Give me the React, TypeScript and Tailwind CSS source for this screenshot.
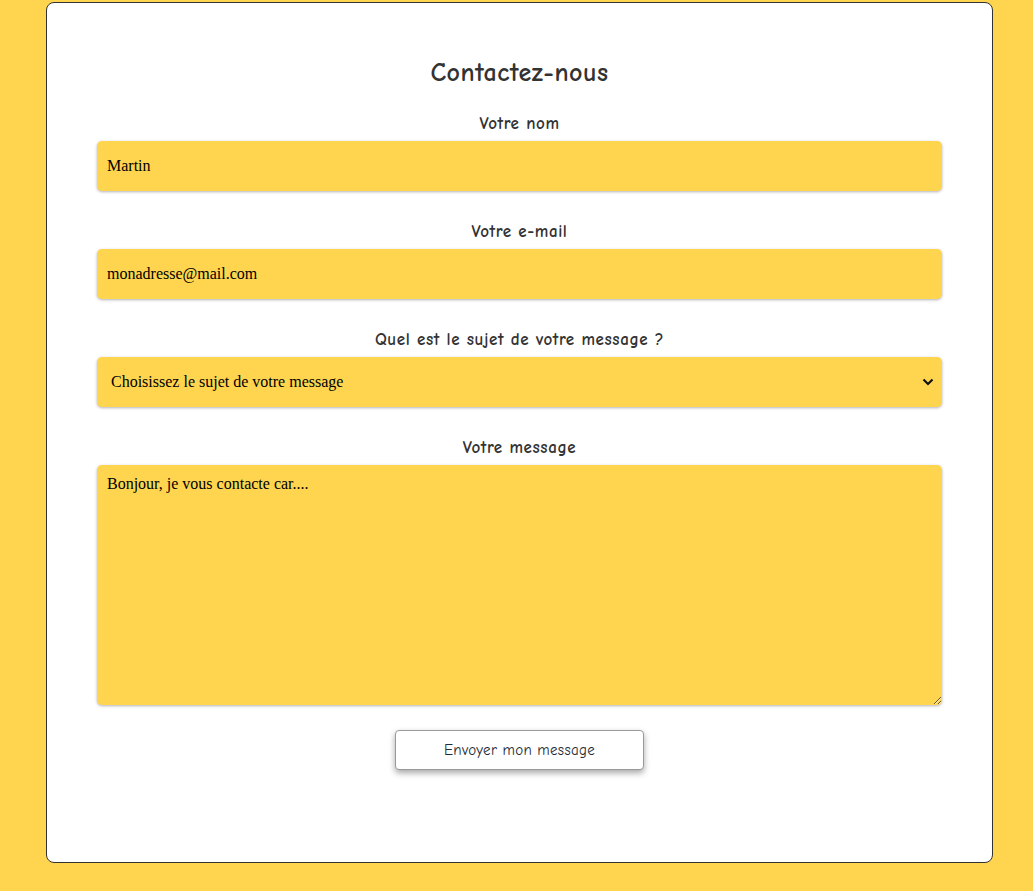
import { useState } from "react";

const comic = "font-['Comic_Sans_MS','Comic_Neue','Lato',sans-serif]";
const labelCls = `${comic} block text-center text-[17px] font-bold leading-[20px] tracking-[0.6px] text-[#333]`;
const fieldCls =
  "h-[50px] w-full rounded-[5px] bg-[#ffd54f] font-['Liberation_Serif',serif] text-[16px] text-black shadow-[0_1px_3px_rgba(0,0,0,0.3)] outline-none";

export default function App() {
  const [name, setName] = useState("Martin");
  const [email, setEmail] = useState("monadresse@mail.com");
  const [message, setMessage] = useState("Bonjour, je vous contacte car....");

  return (
    <div className="min-h-[891px] w-full bg-[#ffd54f] pt-[2px]">
      <div className="ml-[46px] h-[861px] w-[947px] rounded-[8px] border border-[#333] bg-white px-[50px] pt-[54px]">
        <h2 className={`${comic} text-center text-[26px] font-bold leading-[32px] tracking-[0.5px] text-[#333]`}>
          Contactez-nous
        </h2>

        <form className="mt-[25px] flex flex-col" onSubmit={(e) => e.preventDefault()}>
          {/* Nom */}
          <label className={labelCls}>Votre nom</label>
          <input
            value={name}
            onChange={(e) => setName(e.target.value)}
            className={`${fieldCls} mt-[7px] px-[10px]`}
          />

          {/* Email */}
          <label className={`${labelCls} mt-[31px]`}>Votre e-mail</label>
          <input
            value={email}
            onChange={(e) => setEmail(e.target.value)}
            className={`${fieldCls} mt-[7px] px-[10px]`}
          />

          {/* Sujet */}
          <label className={`${labelCls} mt-[31px]`}>Quel est le sujet de votre message ?</label>
          <div className="relative mt-[7px]">
            <select defaultValue="" className={`${fieldCls} appearance-none pl-[14px] pr-[30px]`}>
              <option value="">Choisissez le sujet de votre message</option>
              <option value="info">Demande d'information</option>
              <option value="autre">Autre</option>
            </select>
            <svg
              className="pointer-events-none absolute right-[8px] top-[20px]"
              width="12"
              height="9"
              viewBox="0 0 12 9"
              fill="none"
            >
              <path d="M1.5 2.5 L6 7 L10.5 2.5" stroke="#111" strokeWidth="2.2" />
            </svg>
          </div>

          {/* Message */}
          <label className={`${labelCls} mt-[31px]`}>Votre message</label>
          <textarea
            value={message}
            onChange={(e) => setMessage(e.target.value)}
            className="mt-[7px] h-[240px] w-full rounded-[5px] bg-[#ffd54f] px-[10px] py-[9px] font-['Liberation_Serif',serif] text-[16px] leading-[19px] text-black shadow-[0_1px_3px_rgba(0,0,0,0.3)] outline-none"
          />

          <button
            type="submit"
            className={`${comic} mx-auto mt-[25px] h-[40px] w-[249px] rounded-[4px] border border-[#999] bg-white text-[15px] tracking-[0.3px] text-[#222a35] shadow-[0_3px_6px_rgba(0,0,0,0.35)]`}
          >
            Envoyer mon message
          </button>
        </form>
      </div>
    </div>
  );
}
